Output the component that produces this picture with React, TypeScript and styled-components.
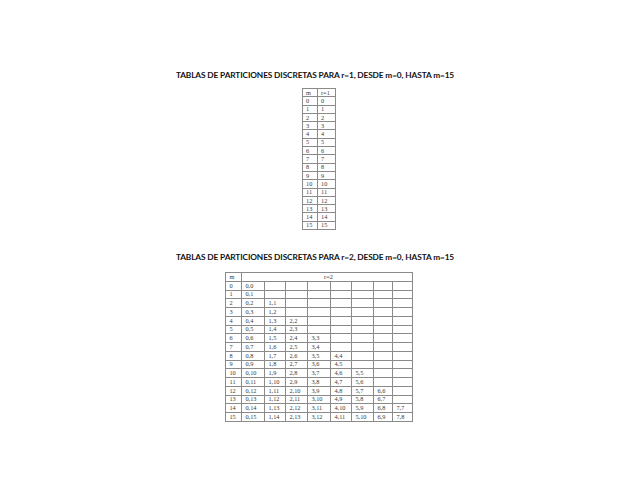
import React from "react";
import styled, { createGlobalStyle } from "styled-components";

const GlobalStyle = createGlobalStyle`
  html, body {
    margin: 0;
    padding: 0;
    background: #ffffff;
  }
`;

const Page = styled.div`
  width: 638px;
  height: 493px;
  display: flex;
  flex-direction: column;
  align-items: center;
  padding-top: 70px;
  box-sizing: border-box;
`;

const Title = styled.div<{ $gap: number }>`
  font-family: Lato, "Liberation Sans", sans-serif;
  font-weight: 700;
  font-size: 8.3px;
  line-height: 10px;
  color: #111;
  letter-spacing: -0.12px;
  margin-right: 8px;
  margin-bottom: ${(p) => p.$gap}px;
  white-space: nowrap;
`;

const Grid = styled.table<{ $rowH: number; $width: number }>`
  border-collapse: collapse;
  table-layout: fixed;
  width: ${(p) => p.$width}px;
  font-family: "Liberation Serif", serif;
  font-size: 6.3px;
  color: #3a3a3a;
  tr {
    height: ${(p) => p.$rowH}px;
  }
  td {
    border: 0.8px solid #8a8a8a;
    padding: 0 0 0 3px;
    line-height: 6px;
    text-align: left;
    vertical-align: middle;
    white-space: nowrap;
    overflow: hidden;
  }
`;

const HeadCell = styled.td`
  text-align: center !important;
`;

const SmallTable = styled(Grid)`
  margin-bottom: 22px;
`;

const rows = Array.from({ length: 16 }, (_, i) => i);
const widths = [16, 23, 21, 22, 23, 21, 22, 19, 19];

const partitions = (m: number): string[] => {
  const out: string[] = [];
  for (let k = 0; k <= 7; k++) {
    out.push(m - 2 * k >= 0 ? `${k},${m - k}` : "");
  }
  return out;
};

export default function App() {
  return (
    <Page>
      <GlobalStyle />
      <Title $gap={8}>TABLAS DE PARTICIONES DISCRETAS PARA r=1, DESDE m=0, HASTA m=15</Title>
      <SmallTable $rowH={8.3} $width={33}>
        <colgroup>
          <col style={{ width: 15 }} />
          <col style={{ width: 18 }} />
        </colgroup>
        <tbody>
          <tr>
            <td>m</td>
            <td>r=1</td>
          </tr>
          {rows.map((m) => (
            <tr key={m}>
              <td>{m}</td>
              <td>{m}</td>
            </tr>
          ))}
        </tbody>
      </SmallTable>
      <Title $gap={10}>TABLAS DE PARTICIONES DISCRETAS PARA r=2, DESDE m=0, HASTA m=15</Title>
      <Grid $rowH={8.75} $width={186}>
        <colgroup>
          {widths.map((w, i) => (
            <col key={i} style={{ width: w }} />
          ))}
        </colgroup>
        <tbody>
          <tr>
            <td>m</td>
            <HeadCell colSpan={8}>r=2</HeadCell>
          </tr>
          {rows.map((m) => (
            <tr key={m}>
              <td>{m}</td>
              {partitions(m).map((p, k) => (
                <td key={k}>{p}</td>
              ))}
            </tr>
          ))}
        </tbody>
      </Grid>
    </Page>
  );
}
